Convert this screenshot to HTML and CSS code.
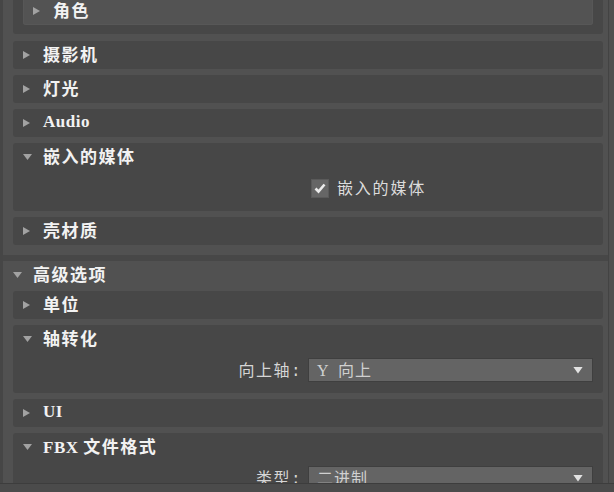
FILE: index.html
```html
<!DOCTYPE html>
<html lang="zh">
<head>
    <meta charset="UTF-8">
    <title>导出设置</title>
    <link rel="stylesheet" href="styles.css">
</head>
<body>

    <div class="window">
        <div class="view">
            <div class="scroll">

                <!-- 包括 (上半部分已滚出) -->
                <div class="group-body">
                    <div class="roll roll-cut">
                        <div class="roll inner">
                            <div class="head"><span class="tri"></span><span class="title">角色</span></div>
                        </div>
                    </div>

                    <div class="roll">
                        <div class="head"><span class="tri"></span><span class="title">摄影机</span></div>
                    </div>
                    <div class="roll">
                        <div class="head"><span class="tri"></span><span class="title">灯光</span></div>
                    </div>
                    <div class="roll">
                        <div class="head"><span class="tri"></span><span class="title lat">Audio</span></div>
                    </div>
                    <div class="roll">
                        <div class="head"><span class="tri open"></span><span class="title">嵌入的媒体</span></div>
                        <div class="body">
                            <div class="row">
                                <span></span>
                                <label class="check">
                                    <span class="box">
                                        <svg width="14" height="14" viewBox="0 0 14 14"><path d="M2.5 7.5 L5.5 10.5 L11.5 3.5" fill="none" stroke="#ececec" stroke-width="2.6"/></svg>
                                    </span>
                                    <span class="text">嵌入的媒体</span>
                                </label>
                            </div>
                        </div>
                    </div>
                    <div class="roll">
                        <div class="head"><span class="tri"></span><span class="title">壳材质</span></div>
                    </div>
                </div>

                <div class="sep"></div>

                <!-- 高级选项 -->
                <div class="head top"><span class="tri open"></span><span class="title">高级选项</span></div>
                <div class="group-body adv">
                    <div class="roll">
                        <div class="head"><span class="tri"></span><span class="title">单位</span></div>
                    </div>
                    <div class="roll">
                        <div class="head"><span class="tri open"></span><span class="title">轴转化</span></div>
                        <div class="body">
                            <div class="row">
                                <span class="label">向上轴:</span>
                                <div class="select"><span class="value"><span class="lat">Y </span>向上</span><span class="arrow"></span></div>
                            </div>
                        </div>
                    </div>
                    <div class="roll">
                        <div class="head"><span class="tri"></span><span class="title lat">UI</span></div>
                    </div>
                    <div class="roll">
                        <div class="head"><span class="tri open"></span><span class="title"><span class="lat">FBX </span>文件格式</span></div>
                        <div class="body">
                            <div class="row">
                                <span class="label">类型:</span>
                                <div class="select"><span class="value">二进制</span><span class="arrow"></span></div>
                            </div>
                        </div>
                    </div>
                </div>

            </div>
            <div class="vbar"></div>
        </div>
        <div class="hbar"></div>
    </div>

</body>
</html>
```

FILE: styles.css
```css
body {
    margin: 0;
    padding: 0;
    background: #474747;
    font-family: "Liberation Mono", "Noto Sans CJK SC", monospace;
    overflow: hidden;
}
.window {
    width: 614px;
    height: 492px;
    display: flex;
    flex-direction: column;
}
.view {
    height: 483px;
    display: flex;
    padding-left: 3px;
    background: #464646;
    overflow: hidden;
}
.scroll {
    width: 605px;
    background: #515151;
}
.vbar {
    flex: 1;
    border-left: 1px solid #434343;
    background: #4f4f4f;
}
.hbar {
    flex: 1;
    border-top: 1px solid #3d3d3d;
    background: #4b4b4b;
}
.group-body {
    display: flex;
    flex-direction: column;
    gap: 6px;
    padding: 0 5px 10px 10px;
}
.group-body.adv {
    padding-top: 2px;
}
.sep {
    height: 6px;
    background: #474747;
}
.roll {
    background: #474747;
    border-radius: 3px;
}
.roll-cut {
    margin-top: -10px;
    margin-bottom: 1px;
    padding: 7px 10px 9px;
}
.roll.inner {
    background: #535353;
    box-shadow: inset 0 0 0 1px #575757;
}
.head {
    box-sizing: border-box;
    height: 28px;
    display: flex;
    align-items: center;
    padding: 0 0 3px 10px;
}
.head.top {
    background: #515151;
}
.tri {
    width: 20px;
    display: flex;
    align-items: center;
    margin-top: 3px;
}
.tri::before {
    content: "";
    width: 7px;
    height: 8px;
    background: #a2a2a2;
    clip-path: polygon(0 0, 100% 50%, 0 100%);
}
.tri.open::before {
    width: 9px;
    height: 6px;
    clip-path: polygon(0 0, 100% 0, 50% 100%);
}
.title {
    color: #f2f2f2;
    font-weight: bold;
    font-size: 17px;
    letter-spacing: 1.5px;
}
.lat {
    font-family: "Liberation Serif", "Noto Sans CJK SC", serif;
    letter-spacing: 0.5px;
    font-size: 17px;
}
.body {
    padding: 4px 10px 12px;
}
.row {
    height: 24px;
    display: grid;
    grid-template-columns: 1fr 285px;
    column-gap: 8px;
    align-items: center;
}
.label {
    text-align: right;
    color: #d6d6d6;
    font-size: 16px;
    letter-spacing: 1.5px;
    margin: 0 -2px 2px 0;
}
.check {
    display: flex;
    align-items: center;
    gap: 8px;
    margin-left: 3px;
}
.box {
    width: 16px;
    height: 17px;
    background: #666666;
    border: 1px solid #5a5a5a;
    display: flex;
    align-items: center;
    justify-content: center;
}
.check .text {
    color: #dcdcdc;
    font-size: 16px;
    letter-spacing: 1.8px;
    margin-bottom: 2px;
}
.select {
    height: 22px;
    background: #646464;
    border: 1px solid #3f3f3f;
    display: flex;
    align-items: center;
    justify-content: space-between;
    padding: 0 9px 0 8px;
}
.select .value {
    color: #d0d0d0;
    font-size: 16px;
    letter-spacing: 1px;
    margin-bottom: 2px;
}
.select .lat {
    font-weight: normal;
    font-size: 16px;
    letter-spacing: 3px;
}
.arrow {
    width: 10px;
    height: 7px;
    background: #e2e2e2;
    clip-path: polygon(0 0, 100% 0, 50% 100%);
}
```
